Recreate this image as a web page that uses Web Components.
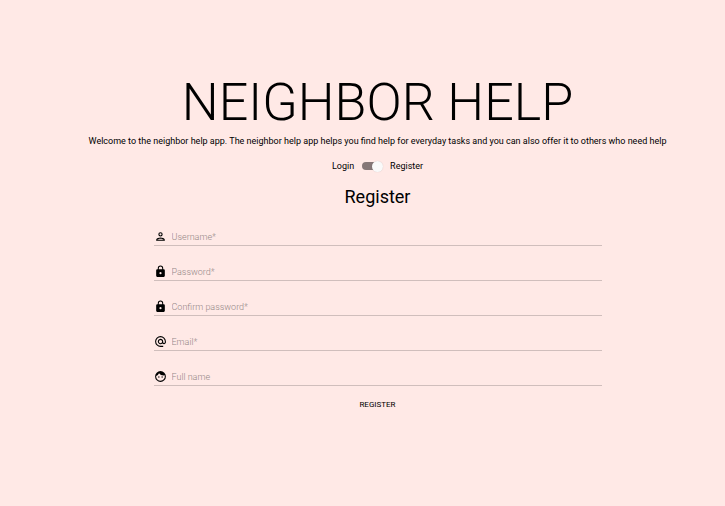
<!DOCTYPE html>
<html lang="en"><head><meta charset="utf-8"><title>Neighbor Help</title>
<style>
html,body{margin:0;min-height:100vh;background:#ffe9e6;color:#000;font-family:Roboto,sans-serif}
</style></head><body>
<help-page></help-page>
<script>
class AuthSwitch extends HTMLElement{
 constructor(){super();this.attachShadow({mode:'open'}).innerHTML=`<style>
 :host{display:flex;align-items:center;justify-content:center;gap:7px;font-size:9px;line-height:12px}
 input{appearance:none;margin:0;width:22px;height:12px;border-radius:6px;display:grid;align-items:center}
 input::before,input::after{content:"";grid-area:1/1}
 input::before{width:20px;height:8px;margin-left:1px;border-radius:4px;background:#857777}
 input::after{justify-self:end;width:11px;height:11px;border-radius:50%;background:#fafafa;box-shadow:0 0 1px #0003}
 </style><label for="mode">Login</label><input id="mode" type="checkbox" role="switch" checked aria-label="Register mode"><label for="mode">Register</label>`}
}
customElements.define('auth-switch',AuthSwitch);

const icons={
 person:'M12 6a2 2 0 1 1 0 4 2 2 0 0 1 0-4m0 10c2.7 0 5.800 1.290 6 2H6c.230-.720 3.310-2 6-2m0-12a4 4 0 1 0 0 8 4 4 0 0 0 0-8zm0 10c-2.670 0-8 1.340-8 4v2h16v-2c0-2.660-5.330-4-8-4z',
 lock:'M18 8h-1V6A5 5 0 0 0 7 6v2H6a2 2 0 0 0-2 2v10a2 2 0 0 0 2 2h12a2 2 0 0 0 2-2V10a2 2 0 0 0-2-2zm-6 9a2 2 0 1 1 0-4 2 2 0 0 1 0 4zm3.100-9H8.900V6a3.100 3.100 0 0 1 6.200 0z',
 email:'M12 2a10 10 0 0 0 0 20h5v-2h-5a8 8 0 1 1 8-8v1.430c0 .790-.710 1.570-1.500 1.570S17 14.220 17 13.430V12a5 5 0 1 0-1.460 3.530A3.680 3.680 0 0 0 18.500 17c1.970 0 3.500-1.600 3.500-3.570V12A10 10 0 0 0 12 2zm0 13a3 3 0 1 1 0-6 3 3 0 0 1 0 6z',
 face:'M9 11.750a1.250 1.250 0 1 0 0 2.500 1.250 1.250 0 0 0 0-2.500zm6 0a1.250 1.250 0 1 0 0 2.500 1.250 1.250 0 0 0 0-2.500zM12 2a10 10 0 1 0 0 20 10 10 0 0 0 0-20zm0 18a8 8 0 0 1-8-8c0-.290.020-.580.050-.860a10.050 10.050 0 0 0 5.210-5.370A9.990 9.990 0 0 0 17.420 10c.780 0 1.530-.090 2.250-.260A8 8 0 0 1 12 20z'
};
class IconField extends HTMLElement{
 constructor(){super();this.attachShadow({mode:'open'})}
 connectedCallback(){
 const label=this.getAttribute('label'),kind=this.getAttribute('type')||'text';
 this.shadowRoot.innerHTML=`<style>
 :host{display:flex;align-items:center;gap:5px;height:17px;border-bottom:1px solid #d0bebc}
 svg{flex:none;width:13px;height:13px}
 input{flex:1;min-width:0;border:0;outline:0;padding:0;background:none;font:9px/16px Roboto,sans-serif;color:#000}
 input::placeholder{color:#958886;font-weight:300;opacity:1}
 </style><svg viewBox="0 0 24 24" aria-hidden="true"><path d="${icons[this.getAttribute('icon')]}"/></svg><input type="${kind}" aria-label="${label}" placeholder="${label}">`}
}
customElements.define('icon-field',IconField);

class RegisterForm extends HTMLElement{
 constructor(){super();this.attachShadow({mode:'open'}).innerHTML=`<style>
 :host{display:block}
 form{display:flex;flex-direction:column;gap:17px}
 button{align-self:center;border:0;background:none;padding:0;font:8px/12px Roboto,sans-serif;color:#000;text-transform:uppercase;margin-top:-4px}
 </style><form>
 <icon-field icon="person" label="Username*"></icon-field>
 <icon-field icon="lock" type="password" label="Password*"></icon-field>
 <icon-field icon="lock" type="password" label="Confirm password*"></icon-field>
 <icon-field icon="email" type="email" label="Email*"></icon-field>
 <icon-field icon="face" label="Full name"></icon-field>
 <button type="button">Register</button></form>`}
}
customElements.define('register-form',RegisterForm);

class HelpPage extends HTMLElement{
 constructor(){super();this.attachShadow({mode:'open'}).innerHTML=`<style>
 :host{display:block;padding:72px 0 0 30px;text-align:center}
 h1,h2,p{margin:0}
 h1{font-weight:300;font-size:52px;line-height:62px}
 p{font-size:9px;line-height:14px}
 auth-switch{margin-top:12px}
 h2{font-weight:400;font-size:18px;line-height:24px;margin-top:13px}
 register-form{width:calc(100% - 247px);margin:19px auto 0;text-align:left}
 </style><main><h1>NEIGHBOR HELP</h1>
 <p>Welcome to the neighbor help app. The neighbor help app helps you find help for everyday tasks and you can also offer it to others who need help</p>
 <auth-switch></auth-switch><h2>Register</h2><register-form></register-form></main>`}
}
customElements.define('help-page',HelpPage);
</script></body></html>
